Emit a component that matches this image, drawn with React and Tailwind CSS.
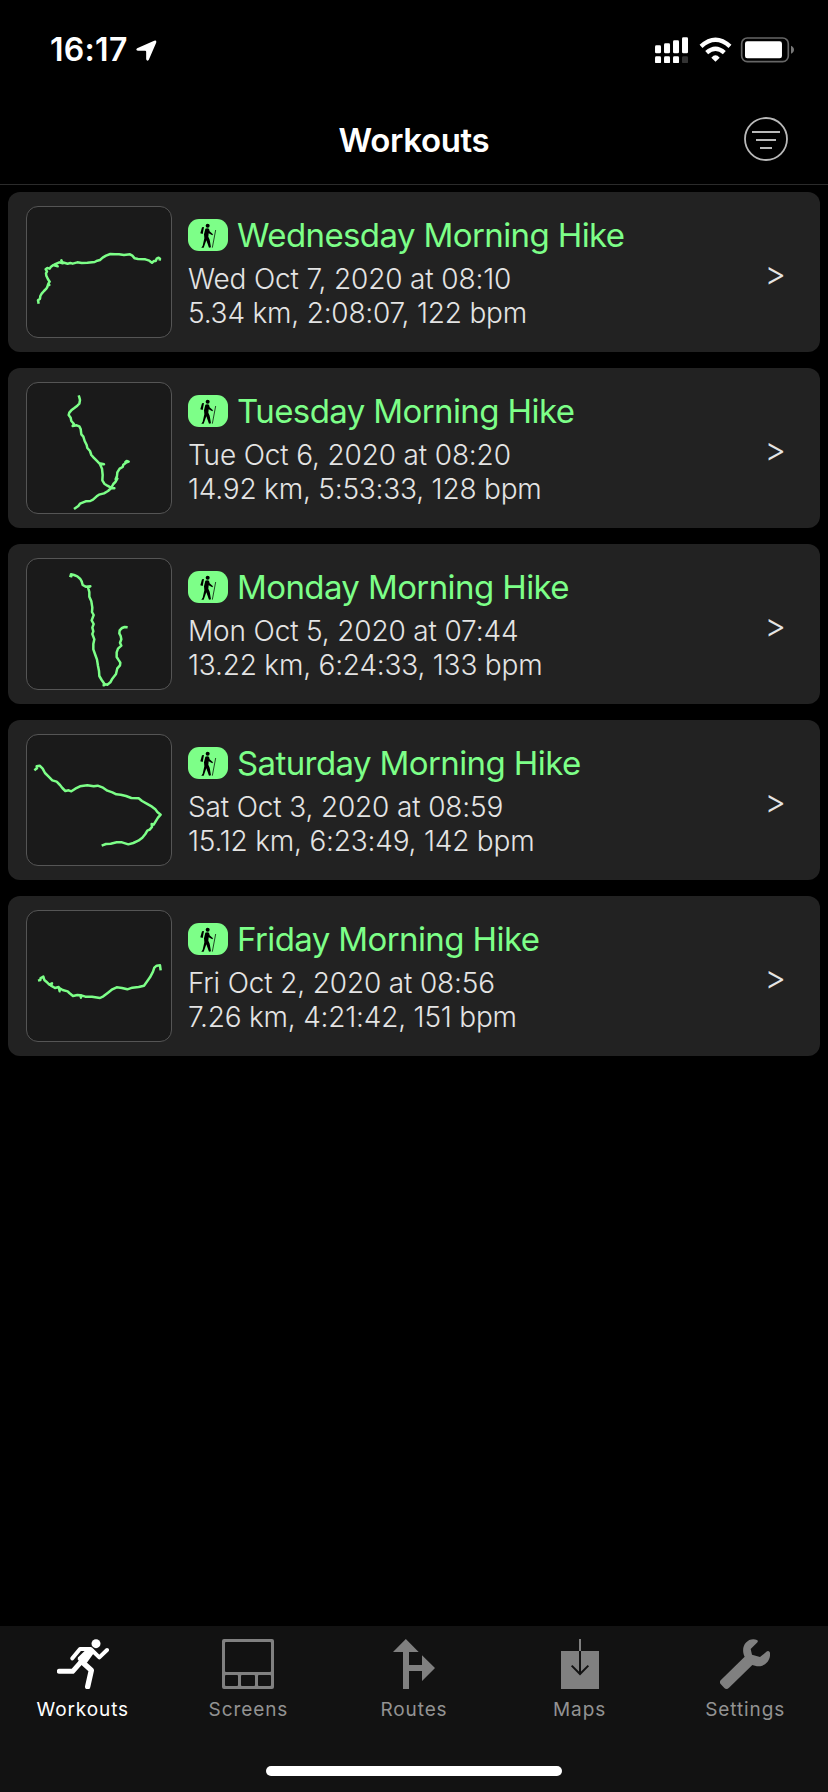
const workouts = [
  {
    title: 'Wednesday Morning Hike',
    date: 'Wed Oct 7, 2020 at 08:10',
    stats: '5.34 km, 2:08:07, 122 bpm',
    box: '81 66 432 390',
    track:
      'M116 356L114 346L120 341L121 333L125 326L132 318L139 311L142 306L144 299L148 300L145 296L149 290L144 283L139 272L138 265L141 259L137 253L142 249L149 251L153 245L160 240L173 244L164 238L178 232L188 235L184 226L187 232L203 236L211 234L218 236L232 232L245 234L262 233L284 231L292 227L300 225L308 218L318 212L331 207L345 208L357 208L372 210L390 208L397 212L404 220L414 222L436 223L448 227L456 233L462 228L467 228L470 221L476 218L480 221L479 227',
  },
  {
    title: 'Tuesday Morning Hike',
    date: 'Tue Oct 6, 2020 at 08:20',
    stats: '14.92 km, 5:53:33, 128 bpm',
    box: '81 54 432 390',
    track:
      'M236 91L238 97L240 105L238 116L232 122L222 130L214 136L208 143L206 150L212 158L214 168L222 177L218 183L230 181L238 184L242 192L244 208L250 215L254 228L260 240L262 249L270 258L274 270L281 278L290 287L298 295L312 298L300 298L306 311L308 330L307 346L313 356L322 362L333 368L343 370L334 369L324 378L312 385L297 389L290 394L279 404L271 408L257 409L240 416L235 423L222 432M334 368L340 357L346 351L352 341L347 343L351 333L352 322L359 311L368 306L370 299L378 293L386 290L380 288L374 294',
  },
  {
    title: 'Monday Morning Hike',
    date: 'Mon Oct 5, 2020 at 07:44',
    stats: '13.22 km, 6:24:33, 133 bpm',
    box: '81 57 432 390',
    track:
      'M208 107L214 109L213 103L222 105L232 109L241 117L245 124L248 135L257 140L271 139L264 142L268 156L268 170L274 184L277 203L276 216L281 225L275 241L281 252L277 263L280 274L277 282L283 298L280 312L280 328L286 345L291 359L294 378L297 393L298 408L305 420L312 430L311 436L317 433L322 434L331 427L337 416L348 402L352 385L360 376L361 368L355 359L350 351L350 337L354 326L364 317L360 308L364 298L362 288L358 280L359 271L366 264L374 261L383 262',
  },
  {
    title: 'Saturday Morning Hike',
    date: 'Sat Oct 3, 2020 at 08:59',
    stats: '15.12 km, 6:23:49, 142 bpm',
    box: '81 60 432 390',
    track:
      'M103 166L111 160L110 154L119 152L128 161L135 174L146 185L157 196L170 200L180 210L187 219L196 228L206 226L214 229L226 221L240 214L262 211L281 214L293 212L307 217L322 227L337 232L349 238L362 239L378 243L394 249L416 250L426 258L440 266L456 275L466 283L472 291L482 299L474 308L467 319L461 329L455 327L456 336L449 344L442 347L436 357L427 368L415 377L400 384L385 388L366 382L350 382L332 386L318 387L305 392',
  },
  {
    title: 'Friday Morning Hike',
    date: 'Fri Oct 2, 2020 at 08:56',
    stats: '7.26 km, 4:21:42, 151 bpm',
    box: '81 63 432 390',
    track:
      'M114 272L121 270L122 264L130 260L133 270L139 275L148 284L156 280L153 287L165 294L176 291L179 304L178 294L188 300L203 304L208 309L219 318L232 315L241 316L243 323L244 316L256 320L276 320L300 324L310 319L324 308L337 298L350 292L366 294L382 298L397 293L416 291L432 287L440 276L450 262L459 245L463 233L470 227L480 226L482 241',
  },
]

function HikerBadge() {
  return (
    <svg viewBox="564 102 120 96" className="h-8 w-10 shrink-0 rounded-[11px] bg-[#7dff88]">
      <circle cx="623" cy="122.500" r="6" />
      <path d="M606 127L612 126L608 147L601 145Z" />
      <path d="M616 131Q621 128 627 131L629 139L639 148L637 151L626 145L625 155L629 164L633 187L627 188L619 166L611 188L604 188L608 182L613 160L612 148Z" />
      <path d="M647 135L637 188" stroke="#000" strokeWidth="2.2" fill="none" />
    </svg>
  )
}

function WorkoutCard({ workout }) {
  return (
    <li className="flex h-40 items-center rounded-xl bg-[#222222] pl-[18px] pr-[34px]">
      <div className="h-[132px] w-[146px] shrink-0 overflow-hidden rounded-xl border border-[#555555] bg-[#1a1a1a]">
        <svg viewBox={workout.box} className="h-full w-full">
          <path d={workout.track} fill="none" stroke="#7dff88" strokeWidth="7.5" strokeLinejoin="round" />
        </svg>
      </div>
      <div className="ml-4 flex grow flex-col whitespace-nowrap">
        <div className="flex h-10 items-center gap-[9px]">
          <HikerBadge />
          <h2 className="text-[33px] leading-10 tracking-[-0.6px] text-[#7dff88]">{workout.title}</h2>
        </div>
        <p className="mt-[7px] text-[28px] font-light leading-[34px] tracking-[-0.15px] text-[#e4e4e4]">{workout.date}</p>
        <p className="text-[28px] font-light leading-[34px] tracking-[-0.2px] text-[#e4e4e4]">{workout.stats}</p>
      </div>
      <span className="mt-0.5 text-[33px] font-light leading-[34px] text-[#e4e4e4]">&gt;</span>
    </li>
  )
}

function StatusBar() {
  return (
    <div className="flex h-[100px] items-start justify-between pl-[50px] pr-[34px]">
      <div className="flex h-[100px] items-center gap-2">
        <span className="text-[32px] font-semibold leading-10 tracking-[0.3px]">16:17</span>
        <svg viewBox="408 118 62 63" className="h-[21px] w-[21px]">
          <path
            d="M411 143L462 120Q470 117 468 126L446 177Q441 184 438 176V153Q438 150 435 150H413Q405 148 411 143Z"
            fill="#fff"
          />
        </svg>
      </div>
      <svg viewBox="723 110 417 80" className="mt-[36.667px] h-[26.667px] w-[139px]">
        <g fill="#fff">
          <rect x="723" y="135" width="18" height="24" rx="4" />
          <rect x="750" y="129" width="18" height="30" rx="4" />
          <rect x="777" y="120" width="18" height="39" rx="4" />
          <rect x="804" y="111" width="18" height="48" rx="4" />
          <rect x="723" y="168" width="18" height="21" rx="4" />
          <rect x="750" y="168" width="18" height="21" rx="4" />
          <rect x="777" y="168" width="18" height="21" rx="4" />
          <rect x="804" y="168" width="18" height="21" rx="4" fill="#333" />
          <path d="M892 172Q904.500 158 917 172L904.500 184Z" />
          <rect x="993" y="123" width="111" height="51" rx="7" />
        </g>
        <g fill="none" stroke="#fff" strokeWidth="13">
          <path d="M861 138Q904.500 98 948 138" />
          <path d="M878 157Q904.500 133 931 157" />
        </g>
        <rect x="983" y="113" width="140" height="71" rx="17" fill="none" stroke="#666" strokeWidth="5" />
        <path d="M1131 136Q1140 140 1140 148.500T1131 160Z" fill="#777" />
      </svg>
    </div>
  )
}

function Header() {
  return (
    <header className="grid h-[85px] grid-cols-[1fr_auto_1fr] border-b border-[#2b2b2b]">
      <h1 className="col-start-2 mt-5 text-[33px] font-semibold leading-10 tracking-[-0.35px]">Workouts</h1>
      <svg viewBox="0 0 44 44" className="mr-10 mt-[17px] h-11 w-11 justify-self-end" fill="none" stroke="#b9b9b9">
        <circle cx="22" cy="22" r="21" strokeWidth="1.8" />
        <path d="M8 15h28M12 23h20M16 31h12" strokeWidth="2" />
      </svg>
    </header>
  )
}

function RunnerIcon() {
  return (
    <svg viewBox="171 87 156 150" className="h-[50px] w-[52px]" fill="none" stroke="#fff" strokeLinecap="round" strokeLinejoin="round">
      <circle cx="288" cy="101" r="13.500" fill="#fff" stroke="none" />
      <path d="M217 145L240 117L272 117L298 142L321 120" strokeWidth="12" />
      <path d="M178 184H218L250 148" strokeWidth="15" />
      <path d="M244 154L274 181L263 230" strokeWidth="16" />
      <path d="M264 123L276 125L256 153L240 146Z" fill="#fff" strokeWidth="14" />
    </svg>
  )
}

function ScreensIcon() {
  return (
    <svg viewBox="669 87 156 150" className="h-[50px] w-[52px]">
      <path
        fillRule="evenodd"
        fill="#808080"
        d="M675 87H819Q825 87 825 93V231Q825 237 819 237H675Q669 237 669 231V93Q669 87 675 87ZM681 96Q678 96 678 99V183Q678 186 681 186H813Q816 186 816 183V99Q816 96 813 96ZM681 195Q678 195 678 198V225Q678 228 681 228H714Q717 228 717 225V198Q717 195 714 195ZM729 195Q726 195 726 198V225Q726 228 729 228H765Q768 228 768 225V198Q768 195 765 195ZM780 195Q777 195 777 198V225Q777 228 780 228H813Q816 228 816 225V198Q816 195 813 195Z"
      />
    </svg>
  )
}

function RoutesIcon() {
  return (
    <svg viewBox="1179 87 126 150" className="h-[50px] w-[42px]" fill="#808080">
      <path d="M1217.500 87L1256 126H1227V165H1266V136L1305 174L1266 213V183H1227V237H1209V126H1179Z" />
    </svg>
  )
}

function MapsIcon() {
  return (
    <svg viewBox="438 87 114 150" className="h-[50px] w-[38px]">
      <path d="M438 123H552V237H438ZM492 87H498V123H492Z" fill="#808080" />
      <path d="M495 123V191M470 167L495 192L520 167" fill="none" stroke="#121212" strokeWidth="6" />
    </svg>
  )
}

function SettingsIcon() {
  return (
    <svg viewBox="915 87 150 150" className="h-[50px] w-[50px]" fill="#808080">
      <path d="M1026 90Q1031 93 1026 98L1007 117L1011 134L1035 141L1056 124Q1062 120 1065 128C1068 152 1048 175 1020 167L1012 165L942 233Q935 240 928 234L917 222Q912 217 917 211L989 140C974 110 998 80 1026 90Z" />
    </svg>
  )
}

const tabs = [
  { label: 'Workouts', Icon: RunnerIcon, active: true },
  { label: 'Screens', Icon: ScreensIcon },
  { label: 'Routes', Icon: RoutesIcon },
  { label: 'Maps', Icon: MapsIcon },
  { label: 'Settings', Icon: SettingsIcon },
]

function TabBar() {
  return (
    <footer className="flex h-[166px] flex-col items-center justify-between bg-[#121212] pb-4 pt-[13px]">
      <nav className="grid w-full grid-cols-5">
        {tabs.map(({ label, Icon, active }) => (
          <div key={label} className="flex flex-col items-center">
            <Icon />
            <span
              className={
                active
                  ? 'mt-[9px] text-[19px] font-normal leading-6 tracking-[0.9px] text-white'
                  : 'mt-[9px] text-[19px] font-normal leading-6 tracking-[0.9px] text-[#929292]'
              }
            >
              {label}
            </span>
          </div>
        ))}
      </nav>
      <div className="h-[10px] w-[296px] rounded-full bg-white" />
    </footer>
  )
}

export default function App() {
  return (
    <div className="flex h-[1792px] w-[828px] flex-col bg-black font-['Inter',sans-serif] text-white">
      <StatusBar />
      <Header />
      <main className="grow px-2 pt-[7px]">
        <ul className="flex flex-col gap-4">
          {workouts.map((workout) => (
            <WorkoutCard key={workout.title} workout={workout} />
          ))}
        </ul>
      </main>
      <TabBar />
    </div>
  )
}
